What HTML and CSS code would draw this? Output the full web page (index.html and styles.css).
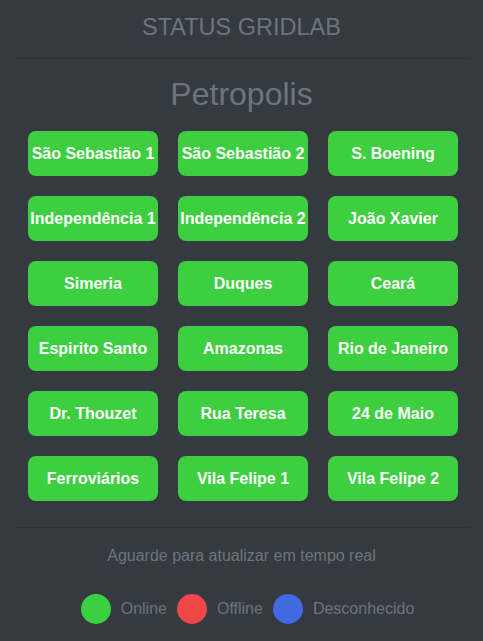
FILE: index.html
```html
<!DOCTYPE html>
<html lang="pt">
<head>
<meta charset="utf-8">
<title>Status Gridlab</title>
<link rel="stylesheet" href="styles.css">
</head>
<body>
<header class="top">
  <h1 class="title">STATUS GRIDLAB</h1>
</header>
<hr class="rule">
<main>
  <h2 class="city">Petropolis</h2>
  <div class="grid">
    <div class="btn">São Sebastião 1</div>
    <div class="btn">São Sebastião 2</div>
    <div class="btn">S. Boening</div>
    <div class="btn">Independência 1</div>
    <div class="btn">Independência 2</div>
    <div class="btn">João Xavier</div>
    <div class="btn">Simeria</div>
    <div class="btn">Duques</div>
    <div class="btn">Ceará</div>
    <div class="btn">Espirito Santo</div>
    <div class="btn">Amazonas</div>
    <div class="btn">Rio de Janeiro</div>
    <div class="btn">Dr. Thouzet</div>
    <div class="btn">Rua Teresa</div>
    <div class="btn">24 de Maio</div>
    <div class="btn">Ferroviários</div>
    <div class="btn">Vila Felipe 1</div>
    <div class="btn">Vila Felipe 2</div>
  </div>
</main>
<hr class="rule rule-bottom">
<footer class="foot">
  <p class="note">Aguarde para atualizar em tempo real</p>
  <div class="legend">
    <span class="dot dot-on"></span><span class="lbl">Online</span>
    <span class="dot dot-off"></span><span class="lbl">Offline</span>
    <span class="dot dot-unk"></span><span class="lbl">Desconhecido</span>
  </div>
</footer>
</body>
</html>
```
FILE: styles.css
```css
html, body {
  margin: 0;
  padding: 0;
}
body {
  background: #343a40;
  font-family: "Liberation Sans", Arial, sans-serif;
  color: #6c757d;
  height: 641px;
  overflow: hidden;
}
.top {
  padding-top: 13px;
}
.title {
  margin: 0;
  font-size: 23.5px;
  line-height: 28px;
  font-weight: normal;
  text-align: center;
  color: #6c757d;
}
.rule {
  margin: 17px 13px 0 15px;
  border: 0;
  border-top: 1px solid #2c3136;
  height: 0;
}
.city {
  margin: 16px 0 0;
  font-size: 32px;
  line-height: 38px;
  font-weight: normal;
  text-align: center;
  color: #6c757d;
}
.grid {
  margin: 18px 0 0 28px;
  display: grid;
  grid-template-columns: repeat(3, 130px);
  grid-auto-rows: 45px;
  gap: 20px;
}
.btn {
  background: #3ecf41;
  color: #fff;
  border-radius: 8px;
  font-weight: bold;
  font-size: 16px;
  display: flex;
  align-items: center;
  justify-content: center;
  white-space: nowrap;
}
.rule-bottom {
  margin-top: 26px;
}
.note {
  margin: 18px 0 0;
  font-size: 16px;
  line-height: 20px;
  text-align: center;
}
.legend {
  margin-top: 28px;
  display: flex;
  align-items: center;
  justify-content: center;
  gap: 10px;
  padding-left: 12px;
}
.dot {
  width: 30px;
  height: 30px;
  border-radius: 50%;
  display: inline-block;
}
.dot-on { background: #3ecf41; }
.dot-off { background: #ef4646; }
.dot-unk { background: #4169e1; }
.lbl {
  font-size: 16px;
  line-height: 20px;
}
```
